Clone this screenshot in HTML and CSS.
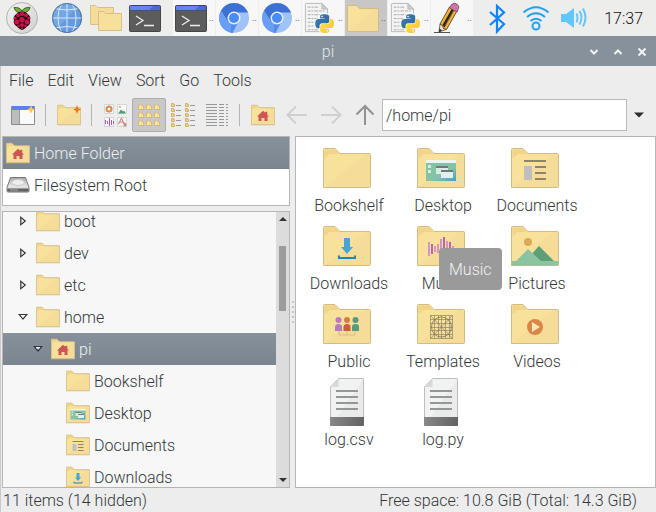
FILE: index.html
```html
<!DOCTYPE html>
<html lang="en">
<head>
<meta charset="utf-8">
<title>pi</title>
<link rel="stylesheet" href="styles.css">
</head>
<body>
<svg class="sprite" aria-hidden="true">
  <defs>
    <linearGradient id="gFolder" x1="0" y1="0" x2="1" y2="1"><stop offset=".5" stop-color="#f8e29b"/><stop offset=".52" stop-color="#f5dc99"/></linearGradient>
    <linearGradient id="gDesk" x1="0" y1="0" x2="1" y2="1"><stop offset=".6" stop-color="#85c3a5"/><stop offset="1" stop-color="#4a9cc4"/></linearGradient>
    <linearGradient id="gPage" x1="0" y1="0" x2="1" y2="1"><stop offset=".5" stop-color="#f1f2f2"/><stop offset=".52" stop-color="#e9eaea"/></linearGradient>
    <linearGradient id="gFoot" x1="0" y1="0" x2="1" y2="0"><stop offset="0" stop-color="#888"/><stop offset="1" stop-color="#636363"/></linearGradient>
    <linearGradient id="gDrive" x1="0" y1="0" x2="0" y2="1"><stop offset="0" stop-color="#a8a8a8"/><stop offset=".6" stop-color="#e6e6e6"/><stop offset="1" stop-color="#c4c4c4"/></linearGradient>
    <linearGradient id="gDisc" x1="0" y1="0" x2="1" y2="1"><stop offset="0" stop-color="#f4f4f4"/><stop offset="1" stop-color="#cfcfcf"/></linearGradient>
    <linearGradient id="gYellow" x1="1" y1="1" x2="0" y2="0"><stop offset="0" stop-color="#ffe052"/><stop offset="1" stop-color="#ffc331"/></linearGradient>
    <linearGradient id="gBlue" x1="0" y1="0" x2="1" y2="1"><stop offset="0" stop-color="#387eb8"/><stop offset="1" stop-color="#2f6596"/></linearGradient>
    <clipPath id="cGlobe"><circle cx="16" cy="16" r="15"/></clipPath>
    <path id="snake" d="M14.25.18l.9.2.73.26.59.3.45.32.34.34.25.34.16.33.1.3.04.26.02.2-.01.13V8.5l-.05.63-.13.55-.21.46-.26.38-.3.31-.33.25-.35.19-.35.14-.33.1-.3.07-.26.04-.21.02H8.77l-.69.05-.59.14-.5.22-.41.27-.33.32-.27.35-.2.36-.15.37-.1.35-.07.32-.04.27-.02.21v3.06H3.17l-.21-.03-.28-.07-.32-.12-.35-.18-.36-.26-.36-.36-.35-.46-.32-.59-.28-.73-.21-.88-.14-1.05-.05-1.23.06-1.22.16-1.04.24-.87.32-.71.36-.57.4-.44.42-.33.42-.24.4-.16.36-.1.32-.05.24-.01h.16l.06.01h8.16v-.83H6.18l-.01-2.75-.02-.37.05-.34.11-.31.17-.28.25-.26.31-.23.38-.2.44-.18.51-.15.58-.12.64-.1.71-.06.77-.04.84-.02 1.27.05zm-6.3 1.98l-.23.33-.08.41.08.41.23.34.33.22.41.09.41-.09.33-.22.23-.34.08-.41-.08-.41-.23-.33-.33-.22-.41-.09-.41.09z"/>
  </defs>

  <symbol id="folder" viewBox="0 0 48 48">
    <path d="M.5 43.500V5.500q0-1 1-1H12l5 5h29.500q1 0 1 1v32q0 1-1 1z" fill="url(#gFolder)" stroke="#d3bb86" vector-effect="non-scaling-stroke"/>
    <path d="M1.500 5.500H12l4.500 4.500H8q-3 0-3.500 2l-3 2z" fill="#f1d48a"/>
  </symbol>
  <symbol id="home" viewBox="0 0 48 48">
    <use href="#folder"/>
    <path d="M24 15.500l4.500 4v-2h4v6l3.500 3.500h-3v9h-6v-6h-6v6h-6v-9h-3z" fill="#cd5555"/>
  </symbol>
  <symbol id="desktop" viewBox="0 0 48 48">
    <use href="#folder"/>
    <path d="M9 18h30v19H9z" fill="url(#gDesk)"/><path d="M9 16h30v3H9z" fill="#f2f2f2"/>
    <path d="M11 21h3v3h-3zM11 26h3v3h-3zM19 23h12v7H19z" fill="#d9ece4"/>
    <path d="M24 27h12v7H24z" fill="#e2efec"/><path d="M19 22h12v2H19zM24 26h12v2H24z" fill="#6d7c78"/>
  </symbol>
  <symbol id="documents" viewBox="0 0 48 48">
    <use href="#folder"/>
    <path d="M13 22h8v14h-8z" fill="#bfbfbf"/>
    <path d="M13 16h22v2H13zM24 22h11v2H24zM24 28h11v2H24zM24 34h11v2H24z" fill="#8e836c"/>
  </symbol>
  <symbol id="downloads" viewBox="0 0 48 48">
    <use href="#folder"/>
    <path d="M21 16h6v9h3l-6 7-6-7h3z" fill="#4aa5cf"/>
    <path d="M16 33.500v2.500h16v-2.500" fill="none" stroke="#2185b6" stroke-width="2"/>
  </symbol>
  <symbol id="music" viewBox="0 0 48 48">
    <use href="#folder"/>
    <path d="M12 20v14M18 24v6M21 22v9M24 17v13M30 19v9M36 24v4" stroke="#d295c4" stroke-width="2"/>
    <path d="M15 22v10M27 15v15M33 20v8" stroke="#b766aa" stroke-width="2"/>
  </symbol>
  <symbol id="pictures" viewBox="0 0 48 48">
    <use href="#folder"/>
    <circle cx="17" cy="20" r="4" fill="#dcaa55"/>
    <path d="M19 34l9-10 15 15H24z" fill="#5f9f78"/>
    <path d="M.500 39H5l12-12 13 12h17.500v4.500H.5z" fill="#8cc3a2"/>
  </symbol>
  <symbol id="public" viewBox="0 0 48 48">
    <use href="#folder"/>
    <path d="M16 31v4h16v-4M24 31v4" fill="none" stroke="#d7bd8b"/>
    <g fill="#b97ac4"><circle cx="15.500" cy="20" r="3"/><path d="M12 31v-4q0-3 3.500-3t3.500 3v4z"/></g>
    <g fill="#d47c45"><circle cx="24" cy="20" r="3"/><path d="M20.500 31v-4q0-3 3.500-3t3.500 3v4z" fill="#cf5d3d"/></g>
    <g fill="#559c80"><circle cx="32.500" cy="20" r="3"/><path d="M29 31v-4q0-3 3.500-3t3.500 3v4z"/></g>
  </symbol>
  <symbol id="templates" viewBox="0 0 48 48">
    <use href="#folder"/>
    <path d="M13.500 15.500h22v23h-22zM17.500 15.500v23M21.500 15.500v23M28.500 15.500v23M32.500 15.500v23M13.500 19.500h22M13.500 23.500h22M13.500 30.500h22M13.500 34.500h22M13.500 15.500l22 23M35.500 15.500l-22 23M24.500 15.500v23M13.500 27.500h22" fill="none" stroke="#7f765e" stroke-width=".6"/>
    <circle cx="24.500" cy="27" r="10" fill="none" stroke="#7f765e" stroke-width=".8"/>
  </symbol>
  <symbol id="videos" viewBox="0 0 48 48">
    <use href="#folder"/>
    <circle cx="24" cy="27" r="8" fill="#d98646"/><path d="M21 22l8 5-8 5z" fill="#f8e8b4"/>
  </symbol>
  <symbol id="file" viewBox="0 0 48 48">
    <path d="M7.500 47V9l8-8.500H40q.500 0 .5.500v46z" fill="url(#gPage)" stroke="#bdbdbd"/>
    <path d="M15.500.500V9h-8z" fill="#d8d9d9"/>
    <path d="M7 39h34v8q0 1-1 1H8q-1 0-1-1z" fill="url(#gFoot)"/>
    <path d="M13 13h22M13 19h22M13 25h22M13 31h22" stroke="#969696" stroke-width="2"/>
  </symbol>
  <symbol id="drive" viewBox="0 0 24 24">
    <path d="M4.500 4.500h15l3.500 10v3.500q0 1-1 1H2q-1 0-1-1v-3.500z" fill="url(#gDrive)" stroke="#777"/>
    <ellipse cx="12" cy="9.500" rx="6.500" ry="3" fill="#eee" stroke="#c8c8c8"/>
    <path d="M1.500 15.500h21v2.500q0 .500-1 .500H2.500q-1 0-1-.5z" fill="#626262"/><path d="M4 17h8" stroke="#aaa"/>
  </symbol>

  <symbol id="terminal" viewBox="0 0 32 32">
    <rect x=".5" y="3.500" width="31" height="26" rx="1" fill="#5c5c5c" stroke="#464646"/>
    <path d="M1 4h30v4H1z" fill="#6486ea"/><path d="M24 4h7v4H20z" fill="#4c6cc4"/><path d="M1 8.500h30" stroke="#44527c"/>
    <path d="M7 14l7 4.500-7 4.500M15 23.500h10" fill="none" stroke="#ededed" stroke-width="1.300"/>
  </symbol>
  <symbol id="chromium" viewBox="0 0 32 32">
    <circle cx="16" cy="16" r="15" fill="#9fc2f9"/>
    <path d="M3 8.500A15 15 0 0 0 14.500 31L20.500 19H9z" fill="#689ef6"/>
    <path d="M3 8.500A15 15 0 0 1 29 8.500L30 10.500H16l-6.500 8.500z" fill="#3c70d3"/>
    <path d="M20.500 19L14.500 31l-2-.5 1-9.500z" fill="#568be8"/>
    <circle cx="16" cy="16" r="6.500" fill="#e6eefb"/><circle cx="16" cy="16" r="5" fill="#478bf3"/>
  </symbol>
  <symbol id="python" viewBox="0 0 34 34">
    <path d="M1.500 31.500V2.500q0-1 1-1H19l6 6v23q0 1-1 1z" fill="#f3f3f3" stroke="#b8b8b8"/>
    <path d="M19 1.500v6h6z" fill="#ccc" stroke="#bbb"/>
    <path d="M4 5.500h12M4 9.500h18M4 13.500h18M4 17.500h18M4 21.500h18M4 25.500h18M4 29.500h18" stroke="#a9a9a9" stroke-dasharray="3 1 2 1 4 1"/>
    <g transform="translate(12 13) scale(.83)">
      <g stroke="#f9f9f9" stroke-width="2.500"><use href="#snake"/><use href="#snake" transform="rotate(180 12 12)"/></g>
      <use href="#snake" fill="url(#gBlue)"/><use href="#snake" transform="rotate(180 12 12)" fill="url(#gYellow)"/>
    </g>
  </symbol>
</svg>

<header class="taskbar">
  <nav class="launchers" aria-label="Launchers">
    <button class="launcher start" aria-label="Menu"><svg viewBox="0 0 32 32">
      <circle cx="16" cy="16" r="15.500" fill="url(#gDisc)" stroke="#b2b2b2"/>
      <path d="M16 11C13 11 9 10 8 5.500c3-.5 6.500.5 8 3.500 1.500-3 5-4 8-3.500C23 10 19 11 16 11z" fill="#72ac3b" stroke="#294b16" stroke-width=".8"/>
      <path d="M16 9.500c3 0 4.500 1 5.500 2.500 2 1 3.500 3.500 2.500 6 1 3-1 5.500-3 6.500-1.500 2-3.500 3-5 3.500-1.500-.5-3.500-1.500-5-3.500-2-1-4-3.500-3-6.500-1-2.500.5-5 2.500-6 1-1.500 2.500-2.500 5.500-2.500z" fill="#2a0510"/>
      <g fill="#c7134a"><circle cx="16" cy="12" r="2.200"/><circle cx="12" cy="13.200" r="2"/><circle cx="20" cy="13.200" r="2"/><circle cx="16" cy="17.800" r="2.800"/><circle cx="10.800" cy="20" r="2.500"/><circle cx="21.200" cy="20" r="2.500"/><circle cx="16" cy="23" r="2"/><circle cx="9.200" cy="16" r="1.500"/><circle cx="22.800" cy="16" r="1.500"/><circle cx="12.600" cy="23.800" r="1.400"/><circle cx="19.400" cy="23.800" r="1.400"/><circle cx="16" cy="26.300" r="1.100"/></g>
    </svg></button>
    <button class="launcher" aria-label="Web browser"><svg viewBox="0 0 32 32">
      <circle cx="16" cy="16" r="15" fill="#73a8e6"/>
      <g clip-path="url(#cGlobe)"><path d="M0 32L32 0v32z" fill="#659bdc"/>
      <g fill="none" stroke="#d8e7f8"><path d="M16 1v30M1 16h30M3 6.500q13 3 26 0M3 26q13-3 26 0"/><ellipse cx="16" cy="16" rx="9" ry="17"/></g></g>
      <circle cx="16" cy="16" r="14.500" fill="none" stroke="#55779f"/>
    </svg></button>
    <button class="launcher" aria-label="File manager"><svg viewBox="0 0 32 32">
      <g fill="#f5dc98" stroke="#d7bf8a"><path d="M.5 22.500v-19h5l2 2h16v17z"/><path d="M8.500 28.500V9.500h5l2 2h16v17z" fill="#f7e09b"/></g>
    </svg></button>
    <button class="launcher" aria-label="Terminal"><svg><use href="#terminal"/></svg></button>
  </nav>
  <div class="tasks">
    <button class="task" aria-label="Terminal window"><svg><use href="#terminal"/></svg><span>..</span></button>
    <button class="task" aria-label="Chromium window"><svg><use href="#chromium"/></svg><span>..</span></button>
    <button class="task" aria-label="Chromium window"><svg><use href="#chromium"/></svg><span>..</span></button>
    <button class="task" aria-label="Python file"><svg><use href="#python"/></svg><span>..</span></button>
    <button class="task active" aria-label="pi folder window"><svg viewBox="0 0 32 32"><path d="M.5 29.500v-26h9l3 3h19v23z" fill="url(#gFolder)" stroke="#d3bb86"/></svg><span>..</span></button>
    <button class="task" aria-label="Python file"><svg><use href="#python"/></svg><span>..</span></button>
    <button class="task" aria-label="Text editor"><svg viewBox="0 0 32 32">
      <path d="M1 30.500h16" stroke="#555"/>
      <g transform="translate(-3 0)"><path d="M9 30l1-8 4 1.500 2 4z" fill="#f3dfc4" stroke="#333" stroke-width=".7"/><path d="M9 30l.5-3.500 2.500 2z" fill="#222"/>
      <path d="M10 22L19.500 5l7.500 4-10.500 18.500-3-1-1-3z" fill="#f4b03e" stroke="#4b3413" stroke-width=".8"/>
      <path d="M12.500 23L22 6.500l2.500 1.300-10 17.700z" fill="#2a251b"/><path d="M15 24L24 8" stroke="#9b7a37" stroke-width=".7"/>
      <path d="M19.500 6l2-3.500q3-2.500 6 0 2 2 1 4l-1.500 3.500z" fill="#cd77a6" stroke="#70465e" stroke-width=".8"/></g>
    </svg><span>..</span></button>
  </div>
  <div class="tray">
    <button aria-label="Bluetooth"><svg viewBox="0 0 32 32"><path d="M9 10l14 12-7 7.500V4l7 6.500L9 23" fill="none" stroke="#0a84ff" stroke-width="2.200"/></svg></button>
    <button aria-label="Wi-Fi"><svg viewBox="0 0 32 32" fill="none" stroke="#22a0f0" stroke-width="2"><path d="M4.500 10.500Q17 0 29.500 10.500M8 15Q17 7.500 26 15M11.500 19Q17 14.500 22.500 19"/><circle cx="17" cy="24" r="3.500"/></svg></button>
    <button aria-label="Volume"><svg viewBox="0 0 32 32" fill="none" stroke="#62c7fb" stroke-width="2"><path d="M4 12h5l8-6v20l-8-6H4z" fill="#62c7fb" stroke="none"/><path d="M19.500 11.500q2 4 0 9M22.500 9q4 6 0 13.500M26 6.500q5 9 0 18"/></svg></button>
    <time class="clock">17:37</time>
  </div>
</header>

<main class="window">
  <div class="titlebar">
    <h1>pi</h1>
    <div class="controls">
      <button aria-label="Minimise"><svg viewBox="0 0 10 10"><path d="M1.500 3L5 6.500 8.500 3"/></svg></button>
      <button aria-label="Maximise"><svg viewBox="0 0 10 10"><path d="M1.500 7L5 3.500 8.500 7"/></svg></button>
      <button aria-label="Close"><svg viewBox="0 0 10 10"><path d="M1.500 1.500l7 7M8.500 1.500l-7 7"/></svg></button>
    </div>
  </div>
  <div class="frame">
  <nav class="menubar"><button>File</button><button>Edit</button><button>View</button><button>Sort</button><button>Go</button><button>Tools</button></nav>
  <div class="toolbar">
    <button class="tool" aria-label="New window"><svg viewBox="0 0 24 24"><path d="M.5 3.500h23v18H.5z" fill="#fafafa" stroke="#8c8c8c"/><path d="M1 7h7v14H1z" fill="#bdbdbd"/><path d="M8.500 7v14" stroke="#999"/><path d="M1 3h22v4H1z" fill="#5b80e8"/><path d="M20 2l1.200 3.200L24 6.500l-2.800 1.200L20 11l-1.200-3.300L16 6.500l2.800-1.300z" fill="#f7c66a"/></svg></button>
    <hr>
    <button class="tool" aria-label="New folder"><svg viewBox="0 0 24 24"><use href="#folder" width="24" height="24"/><path d="M20 2l1.200 3.200L24 6.500l-2.800 1.200L20 11l-1.200-3.300L16 6.500l2.800-1.300z" fill="#e8791f"/></svg></button>
    <hr>
    <button class="tool" aria-label="Thumbnail view"><svg viewBox="0 0 24 24"><g fill="#f8f8f8" stroke="#d6d6d6"><path d="M1.500 1.500h9v9h-9zM14.500 1.500h9v9h-9zM1.500 14.500h9v9h-9zM14.500 14.500h9v9h-9z"/></g><circle cx="6" cy="6" r="2.500" fill="none" stroke="#dc8a4c" stroke-width="2"/><path d="M15 10.500l3-4 2 2 1-1 2 3z" fill="#509b73"/><circle cx="17" cy="4" r="1" fill="#dcaa55"/><path d="M2.500 17v4M4.500 18v3M6.500 15v8M8.500 17v5M10.500 18v3" stroke="#b25dac"/><path d="M15.500 21l3-6 2.500 6M16.500 19h4M21 20q2-1 2 3h-2q-1-2 2-2" fill="none" stroke="#c87970"/></svg></button>
    <button class="tool active" aria-label="Icon view" aria-pressed="true"><svg viewBox="0 0 24 24"><g fill="#f8e2a2" stroke="#d5b873"><path id="mini" d="M1.500 6.500v-5h2l1 1h2v4z"/><use href="#mini" x="8"/><use href="#mini" x="16"/><use href="#mini" y="8"/><use href="#mini" x="8" y="8"/><use href="#mini" x="16" y="8"/><use href="#mini" y="16"/><use href="#mini" x="8" y="16"/><use href="#mini" x="16" y="16"/></g></svg></button>
    <button class="tool" aria-label="Compact view"><svg viewBox="0 0 24 24"><g fill="#f3d38c" stroke="#d1b06a"><path id="dot" d="M.5 3.500v-3h2v1h1v2z"/><use href="#dot" y="5"/><use href="#dot" y="10"/><use href="#dot" y="15"/><use href="#dot" y="20"/><use href="#dot" x="14"/><use href="#dot" x="14" y="5"/><use href="#dot" x="14" y="10"/><use href="#dot" x="14" y="15"/><use href="#dot" x="14" y="20"/></g><path d="M5 2.500h5M5 7.500h5M5 12.500h5M5 17.500h5M5 22.500h5M19 2.500h5M19 7.500h5M19 12.500h5M19 17.500h5M19 22.500h5" stroke="#999"/></svg></button>
    <button class="tool" aria-label="Detailed list view"><svg viewBox="0 0 24 24"><path d="M1 1.500h22M1 4.500h22M1 7.500h22M1 10.500h22M1 13.500h22M1 16.500h22M1 19.500h22M1 22.500h22" stroke="#989898" stroke-dasharray="11 2 5 2 2"/></svg></button>
    <hr>
    <button class="tool" aria-label="Home folder"><svg><use href="#home"/></svg></button>
    <button class="tool" aria-label="Back" disabled><svg viewBox="0 0 24 24"><path d="M22 12H3M11 3.500L2.500 12l8.500 8.500" fill="none" stroke="#d0d0d0" stroke-width="2"/></svg></button>
    <button class="tool" aria-label="Forward" disabled><svg viewBox="0 0 24 24"><path d="M2 12h19M13 3.500l8.500 8.500-8.500 8.500" fill="none" stroke="#d0d0d0" stroke-width="2"/></svg></button>
    <button class="tool" aria-label="Up"><svg viewBox="0 0 24 24"><path d="M12 22V3M3.500 11.500L12 3l8.500 8.500" fill="none" stroke="#919191" stroke-width="2"/></svg></button>
    <input class="address" type="text" value="/home/pi" aria-label="Location">
    <button class="history" aria-label="Location history"><svg viewBox="0 0 10 6"><path d="M0 .5h10L5 5.500z" fill="#2c2c2c"/></svg></button>
  </div>

  <div class="content">
    <aside class="side">
      <ul class="places">
        <li class="row selected"><svg><use href="#home"/></svg>Home Folder</li>
        <li class="row"><svg><use href="#drive"/></svg>Filesystem Root</li>
      </ul>
      <div class="tree">
        <ul class="nodes">
          <li class="row l1"><i class="closed"></i><svg><use href="#folder"/></svg>boot</li>
          <li class="row l1"><i class="closed"></i><svg><use href="#folder"/></svg>dev</li>
          <li class="row l1"><i class="closed"></i><svg><use href="#folder"/></svg>etc</li>
          <li class="row l1"><i class="open"></i><svg><use href="#folder"/></svg>home</li>
          <li class="row l2 selected"><i class="open"></i><svg><use href="#home"/></svg>pi</li>
          <li class="row l3"><i></i><svg><use href="#folder"/></svg>Bookshelf</li>
          <li class="row l3"><i></i><svg><use href="#desktop"/></svg>Desktop</li>
          <li class="row l3"><i></i><svg><use href="#documents"/></svg>Documents</li>
          <li class="row l3"><i></i><svg><use href="#downloads"/></svg>Downloads</li>
        </ul>
        <div class="scrollbar">
          <svg viewBox="0 0 10 6"><path d="M1 5l4-4 4 4z"/></svg>
          <div class="track"><div class="thumb"></div></div>
          <svg viewBox="0 0 10 6"><path d="M1 1l4 4 4-4z"/></svg>
        </div>
      </div>
    </aside>
    <div class="splitter"><b></b><b></b><b></b><b></b><b></b></div>
    <ul class="files">
      <li class="item"><svg><use href="#folder"/></svg>Bookshelf</li>
      <li class="item"><svg><use href="#desktop"/></svg>Desktop</li>
      <li class="item"><svg><use href="#documents"/></svg>Documents</li>
      <li class="item"><svg><use href="#downloads"/></svg>Downloads</li>
      <li class="item"><svg><use href="#music"/></svg>Music<span class="tooltip" role="tooltip">Music</span></li>
      <li class="item"><svg><use href="#pictures"/></svg>Pictures</li>
      <li class="item"><svg><use href="#public"/></svg>Public</li>
      <li class="item"><svg><use href="#templates"/></svg>Templates</li>
      <li class="item"><svg><use href="#videos"/></svg>Videos</li>
      <li class="item"><svg><use href="#file"/></svg>log.csv</li>
      <li class="item"><svg><use href="#file"/></svg>log.py</li>
    </ul>
  </div>
  <footer class="status"><span>11 items (14 hidden)</span><span>Free space: 10.8 GiB (Total: 14.3 GiB)</span></footer>
  </div>
</main>
</body>
</html>
```
FILE: styles.css
```css
* { box-sizing: border-box; }

body {
  margin: 0;
  height: 100vh;
  display: flex;
  flex-direction: column;
  overflow: hidden;
  background: #ededed;
  color: #333639;
  font: 300 16px/20px Roboto, "Liberation Sans", sans-serif;
}

ul { margin: 0; padding: 0; list-style: none; }
svg { display: block; flex: none; }
.sprite { position: absolute; width: 0; height: 0; }

button {
  border: 0;
  padding: 0;
  background: none;
  color: inherit;
  font: inherit;
}

/* Desktop panel */
.taskbar {
  flex: none;
  height: 36px;
  display: flex;
  background: #ededec;
}
.launchers { display: flex; align-items: center; gap: 7px; padding: 0 12px 0 6px; }
.launcher { width: 32px; }
.start { margin-right: 6px; }
.launcher svg, .task svg, .tray svg { width: 32px; height: 32px; }
.tasks { display: flex; gap: 1px; }
.task {
  width: 42px;
  padding-left: 2px;
  display: flex;
  align-items: center;
  gap: 2px;
  background: #f7f7f7;
  font-size: 10px;
}
.task.active { background: #c8c7c5; }
.tray { flex: 1; display: flex; align-items: center; gap: 6px; padding: 2px 13px 0 8px; }
.tray button { margin-top: -2px; }
.clock { margin-left: auto; color: #111; }

/* Window frame */
.window { flex: 1; min-height: 0; display: flex; flex-direction: column; }
.frame {
  flex: 1;
  min-height: 0;
  display: flex;
  flex-direction: column;
  border-left: 1px solid #cacaca;
}
.titlebar {
  flex: none;
  height: 30px;
  display: grid;
  grid-template-columns: 1fr auto 1fr;
  align-items: center;
  padding-top: 2px;
  background: #87919b;
  color: #e3e6e8;
}
.titlebar h1 { grid-column: 2; margin: 0; font: inherit; }
.controls { display: flex; justify-content: flex-end; padding-right: 2px; }
.controls button { width: 24px; display: flex; justify-content: center; }
.controls svg { width: 10px; height: 10px; fill: none; stroke: #f2f3f4; stroke-width: 2; }

.menubar { flex: none; height: 28px; display: flex; gap: 14px; padding: 2px 8px 0; }

.toolbar { flex: none; height: 42px; display: flex; align-items: center; padding: 0 6px 0 5px; }
.tool {
  flex: none;
  width: 34px;
  height: 34px;
  display: flex;
  align-items: center;
  justify-content: center;
  border: 1px solid transparent;
  border-radius: 2px;
}
.tool.active { background: #c8c8c8; border-color: #adadad; }
.tool svg { width: 24px; height: 24px; }
.toolbar hr { flex: none; width: 1px; height: 22px; margin: 0 6px 0 5px; border: 0; background: #b4b4b4; }
.address {
  flex: 1;
  min-width: 0;
  height: 32px;
  padding: 0 3px;
  border: 1px solid #b8b8b8;
  background: #fff;
  color: inherit;
  font: inherit;
}
.history { width: 23px; display: flex; justify-content: center; }
.history svg { width: 10px; height: 6px; }

/* Panes */
.content { flex: 1; min-height: 0; display: flex; padding-left: 1px; }
.side { width: 288px; flex: none; display: flex; flex-direction: column; gap: 5px; }
.places, .tree, .files { border: 1px solid #b6b6b6; background: #fff; }
.places { flex: none; padding-bottom: 4px; }
.places .row { padding-left: 3px; }
.row { height: 32px; display: flex; align-items: flex-start; gap: 4px; line-height: 34px; }
.row svg { width: 24px; height: 24px; align-self: center; }
.selected { background: linear-gradient(#87919b, #7b858f); color: #edeff0; }

.tree { flex: 1; min-height: 0; display: flex; overflow: hidden; background: #f7f7f7; }
.nodes { flex: 1; margin-top: -7px; }
.l1 { padding-left: 15px; }
.l2 { padding-left: 30px; }
.l3 { padding-left: 45px; }
.row i { width: 10px; margin-right: 4px; align-self: center; display: flex; justify-content: center; }
.closed::before, .open::before { content: ""; background: #33373a; }
.closed::before { width: 8px; height: 10px; clip-path: polygon(evenodd, 15% 0, 90% 50%, 15% 100%, 15% 0, 30% 24%, 30% 76%, 66% 50%, 30% 24%); }
.open::before { width: 10px; height: 6px; clip-path: polygon(evenodd, 0 0, 100% 0, 50% 100%, 0 0, 24% 18%, 76% 18%, 50% 70%, 24% 18%); }
.selected .open { background: linear-gradient(#e4e6e8, #e4e6e8) center 1px / 4px 2px no-repeat; }

.scrollbar {
  width: 13px;
  display: flex;
  flex-direction: column;
  align-items: center;
  padding: 4px 0;
  background: #dcdcdc;
}
.scrollbar svg { width: 10px; height: 6px; fill: #333; }
.track { flex: 1; width: 7px; padding-top: 24px; }
.thumb { height: 28%; background: #9c9c9c; }

.splitter { width: 5px; flex: none; display: flex; flex-direction: column; justify-content: center; align-items: center; gap: 3px; }
.splitter b { width: 2px; height: 2px; background: #c4c4c4; }

.files {
  flex: 1;
  padding: 7px 6px;
  display: grid;
  grid-template-columns: repeat(auto-fill, 94px);
  grid-auto-rows: 78px;
}
.item { position: relative; display: flex; flex-direction: column; align-items: center; gap: 3px; line-height: 22px; }
.item svg { width: 48px; height: 48px; margin-right: 4px; }
.tooltip {
  position: absolute;
  left: 43px;
  top: 26px;
  z-index: 1;
  padding: 11px 10px 9px;
  border-radius: 4px;
  background: #9a9a9a;
  color: #f1f1f1;
}

.status { flex: none; height: 24px; display: flex; justify-content: space-between; align-items: center; padding: 2px 19px 0 2px; }
```
